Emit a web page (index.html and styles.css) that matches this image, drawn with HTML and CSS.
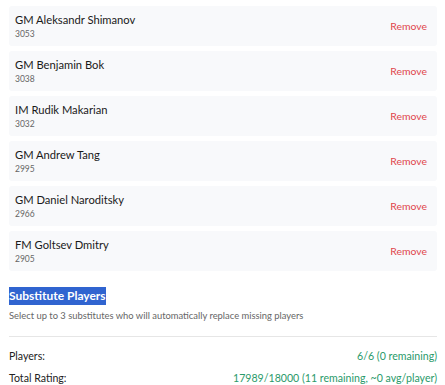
FILE: index.html
```html
<!DOCTYPE html>
<html lang="en">
<head>
    <meta charset="UTF-8">
    <meta name="viewport" content="width=device-width, initial-scale=1.0">
    <title>Team Selection</title>
    <link rel="stylesheet" href="styles.css">
</head>
<body>
    <div class="team-panel">
        <div class="player-list">
            <div class="player-card">
                <div class="player-info">
                    <p class="player-name">GM Aleksandr Shimanov</p>
                    <p class="player-rating">3053</p>
                </div>
                <button class="remove-btn">Remove</button>
            </div>
            <div class="player-card">
                <div class="player-info">
                    <p class="player-name">GM Benjamin Bok</p>
                    <p class="player-rating">3038</p>
                </div>
                <button class="remove-btn">Remove</button>
            </div>
            <div class="player-card">
                <div class="player-info">
                    <p class="player-name">IM Rudik Makarian</p>
                    <p class="player-rating">3032</p>
                </div>
                <button class="remove-btn">Remove</button>
            </div>
            <div class="player-card">
                <div class="player-info">
                    <p class="player-name">GM Andrew Tang</p>
                    <p class="player-rating">2995</p>
                </div>
                <button class="remove-btn">Remove</button>
            </div>
            <div class="player-card">
                <div class="player-info">
                    <p class="player-name">GM Daniel Naroditsky</p>
                    <p class="player-rating">2966</p>
                </div>
                <button class="remove-btn">Remove</button>
            </div>
            <div class="player-card">
                <div class="player-info">
                    <p class="player-name">FM Goltsev Dmitry</p>
                    <p class="player-rating">2905</p>
                </div>
                <button class="remove-btn">Remove</button>
            </div>
        </div>

        <h3 class="section-title"><span class="selected">Substitute Players</span></h3>
        <p class="section-hint">Select up to 3 substitutes who will automatically replace missing players</p>

        <div class="summary">
            <div class="summary-row">
                <span>Players:</span>
                <span class="summary-value">6/6 (0 remaining)</span>
            </div>
            <div class="summary-row">
                <span>Total Rating:</span>
                <span class="summary-value">17989/18000 (11 remaining, ~0 avg/player)</span>
            </div>
        </div>
    </div>
</body>
</html>
```

FILE: styles.css
```css
body {
    margin: 0;
    font-family: Lato, 'Noto Sans', sans-serif;
    color: #1f1f1f;
    background-color: #ffffff;
}

.team-panel {
    padding: 6px 8px 0 9px;
}

.player-list {
    display: flex;
    flex-direction: column;
    gap: 5px;
}

.player-card {
    display: flex;
    justify-content: space-between;
    align-items: center;
    height: 40px;
    box-sizing: border-box;
    padding: 0 6px 0 6px;
    background-color: #f8f9fb;
    border-radius: 3px;
}

.player-name {
    margin: 0;
    font-size: 11.2px;
    line-height: 16px;
    color: #1a1a1a;
}

.player-rating {
    margin: 0;
    font-size: 8.5px;
    line-height: 12px;
    color: #666;
}

.remove-btn {
    background: none;
    border: none;
    padding: 4px;
    font-family: inherit;
    font-size: 10.4px;
    color: #e0454b;
    cursor: pointer;
}

.section-title {
    margin: 16px 0 0 0;
    font-size: 12px;
    line-height: 18px;
    font-weight: bold;
}

.selected {
    display: inline-block;
    line-height: 18px;
    background-color: #3064d0;
    color: #ffffff;
}

.section-hint {
    margin: 4px 0 0 0;
    font-size: 9.4px;
    line-height: 13px;
    color: #666;
}

.summary {
    margin-top: 14px;
    border-top: 1px solid #e6e6e6;
    padding-top: 8px;
}

.summary-row {
    display: flex;
    justify-content: space-between;
    font-size: 10.6px;
    line-height: 22px;
    color: #222;
}

.summary-value {
    color: #2a9a6a;
}
```
